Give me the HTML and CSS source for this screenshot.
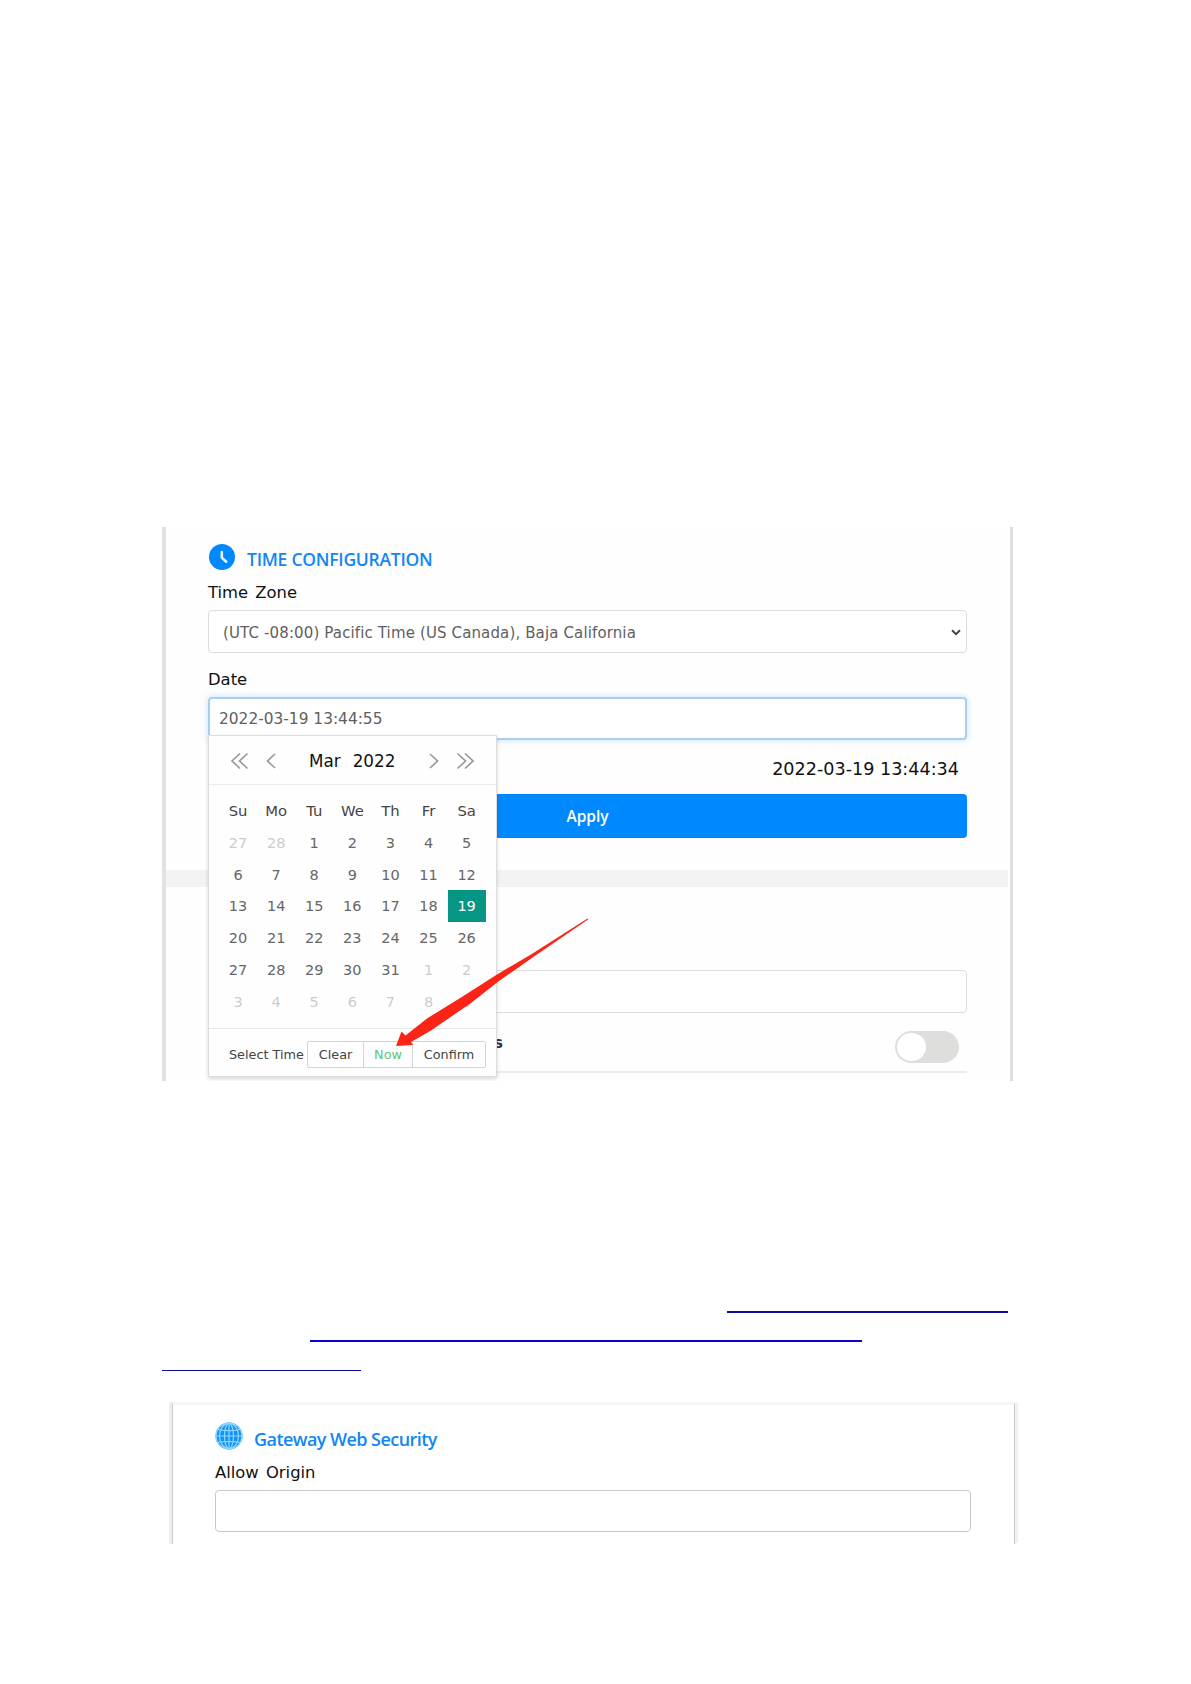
FILE: index.html
```html
<!DOCTYPE html>
<html lang="en">
<head>
    <meta charset="UTF-8">
    <meta name="viewport" content="width=device-width, initial-scale=1.0">
    <title>Time Configuration</title>
    <link rel="stylesheet" href="styles.css">
</head>
<body>
    <div class="time-panel">
        <section class="time-section">
            <h2 class="title">
                <svg class="clock" viewBox="0 0 26 26"><circle cx="13" cy="13" r="13" fill="#0088ff"/><path d="M12.8 8v5.7l4.4 4" fill="none" stroke="#e4f2ff" stroke-width="2.6" stroke-linecap="round"/></svg>
                <span class="title-text time-title">TIME CONFIGURATION</span>
            </h2>
            <div class="label">Time Zone</div>
            <div class="field select">
                <span>(UTC -08:00) Pacific Time (US Canada), Baja California</span>
                <svg class="caret" viewBox="0 0 10 7"><path d="M1 1.2l4 4 4-4" fill="none" stroke="#444" stroke-width="2"/></svg>
            </div>
            <div class="label date-label">Date</div>
            <div class="date-wrap">
                <div class="field date">2022-03-19 13:44:55</div>
                <div class="calendar">
                    <div class="cal-header">
                        <svg class="nav" viewBox="0 0 60 20"><path d="M11 2.500L3 10l8 7.500M18.500 2.500L10.500 10l8 7.500M46 3L38.500 10l7.500 7" fill="none" stroke="#999" stroke-width="1.700"/></svg>
                        <span class="month">Mar</span><span class="year">2022</span>
                        <svg class="nav" viewBox="0 0 60 20"><path d="M48 2.500L56 10l-8 7.500M40.500 2.500L48.500 10l-8 7.500M13 3L20.500 10l-7.500 7" fill="none" stroke="#999" stroke-width="1.700"/></svg>
                    </div>
                    <div class="days">
                        <b>Su</b><b>Mo</b><b>Tu</b><b>We</b><b>Th</b><b>Fr</b><b>Sa</b>
                        <i>27</i><i>28</i><span>1</span><span>2</span><span>3</span><span>4</span><span>5</span>
                        <span>6</span><span>7</span><span>8</span><span>9</span><span>10</span><span>11</span><span>12</span>
                        <span>13</span><span>14</span><span>15</span><span>16</span><span>17</span><span>18</span><span class="selected">19</span>
                        <span>20</span><span>21</span><span>22</span><span>23</span><span>24</span><span>25</span><span>26</span>
                        <span>27</span><span>28</span><span>29</span><span>30</span><span>31</span><i>1</i><i>2</i>
                        <i>3</i><i>4</i><i>5</i><i>6</i><i>7</i><i>8</i><i>9</i>
                    </div>
                    <div class="cal-footer">
                        <span class="select-time">Select Time</span>
                        <div class="buttons">
                            <span class="clear">Clear</span><span class="now">Now</span><span class="confirm">Confirm</span>
                        </div>
                    </div>
                </div>
                <svg class="arrow" viewBox="0 0 196 132"><path d="M193.500 0.500L194 1.500L140 38.500L105 63L77 85L37 112.500L17 124L19 127L2 128L7.500 113.500L11.500 117.500L33 100.500L67 79.500L103 56.500L137 36.500Z" fill="#fb2416"/></svg>
            </div>
            <div class="current-time">2022-03-19 13:44:34</div>
            <div class="apply">Apply</div>
        </section>
        <div class="divider"></div>
        <section class="next-section">
            <div class="field"></div>
            <div class="toggle-row">
                <span class="row-label">s</span>
                <span class="toggle"></span>
            </div>
        </section>
    </div>

    <div class="links">
        <div class="line line-one"></div>
        <div class="line line-two"></div>
        <div class="line line-three"></div>
    </div>

    <div class="security-panel">
        <h2 class="title">
            <svg class="globe" viewBox="0 0 28 28"><circle cx="14" cy="14" r="13.500" fill="#1592f5"/><g fill="none" stroke="#8fd8ff" stroke-width="1.200"><circle cx="14" cy="14" r="12.900"/><ellipse cx="14" cy="14" rx="9.500" ry="12.700"/><ellipse cx="14" cy="14" rx="4.500" ry="12.700"/><path d="M14 1v26M1 14h26M3 7.500q11 2.400 22 0M3 20.500q11-2.400 22 0"/></g></svg>
            <span class="title-text security-title">Gateway Web Security</span>
        </h2>
        <div class="label">Allow Origin</div>
        <div class="field"></div>
    </div>
</body>
</html>
```

FILE: styles.css
```css
*{
    box-sizing: border-box;
}
body{
    margin: 0;
    background: #fff;
    font-family: "DejaVu Sans", Verdana, sans-serif;
    color: #111;
}
.time-panel{
    width: 851px;
    height: 554px;
    margin: 527px 0 0 162px;
    border-left: 4px solid #e2e2e2;
    border-right: 3px solid #dedede;
    background: #fefefe;
    overflow: hidden;
}
.time-section{
    height: 343px;
    padding: 16px 43px 0 42px;
}
.title{
    display: flex;
    margin: 0;
    height: 36px;
}
.clock{
    width: 26px;
    height: 26px;
    margin: 1px 12px 0 1px;
}
.title-text{
    font-family: "Open Sans", sans-serif;
    font-weight: 600;
    font-size: 18px;
    line-height: 26px;
    color: #1087f5;
    white-space: nowrap;
}
.time-title{
    margin-top: 3px;
    font-size: 17.5px;
    letter-spacing: -0.25px;
}
.label{
    height: 31px;
    font-size: 16.4px;
    line-height: 28px;
    word-spacing: 2px;
}
.field{
    height: 43px;
    border: 1px solid #dcdcdc;
    border-radius: 4px;
    background: #fff;
    color: #606060;
}
.select{
    display: flex;
    justify-content: space-between;
    align-items: center;
    padding: 2px 5px 0 14px;
    font-size: 15px;
    letter-spacing: 0.13px;
}
.caret{
    width: 10px;
    height: 7px;
}
.date-label{
    height: 44px;
    padding-top: 13px;
}
.date-wrap{
    position: relative;
    height: 43px;
}
.date{
    padding-left: 9px;
    border: 2px solid #a9cff0;
    font-size: 15.4px;
    line-height: 41px;
    box-shadow: 0 0 6px rgba(130, 195, 255, 0.5);
}
/* date picker, opens over the fields below */
.calendar{
    position: absolute;
    left: 0;
    top: 38px;
    width: 289px;
    height: 342px;
    border: 1px solid #dcdcdc;
    background: #fefefe;
    box-shadow: 0 2px 4px rgba(0, 0, 0, 0.15);
}
.cal-header{
    display: flex;
    align-items: center;
    height: 49px;
    padding: 1px 19px 0 20px;
    border-bottom: 1px solid #ebebeb;
    font-size: 16.8px;
}
.nav{
    width: 60px;
    height: 20px;
}
.month{
    margin-left: 20px;
}
.year{
    margin: 0 auto 0 12px;
}
.days{
    display: grid;
    grid-template-columns: repeat(7, 38.1px);
    grid-template-rows: repeat(7, 31.8px);
    padding: 10px 0 0 10px;
    height: 243px;
    line-height: 32.4px;
    text-align: center;
    font-size: 14.5px;
    color: #666;
}
.days b{
    font-weight: normal;
    font-size: 14.8px;
    color: #444;
}
.days i{
    font-style: normal;
    color: #ccc;
}
.days .selected{
    background: #079585;
    color: #fff;
}
.cal-footer{
    display: flex;
    height: 49px;
    padding: 12px 0 0 20px;
    border-top: 1px solid #e8e8e8;
    font-size: 12.8px;
    color: #444;
}
.select-time{
    width: 78px;
    line-height: 28px;
    white-space: nowrap;
}
.buttons{
    display: flex;
    height: 27px;
    border: 1px solid #d4d4d4;
    border-radius: 2px;
    line-height: 25px;
    text-align: center;
}
.clear{
    width: 55px;
}
.now{
    width: 50px;
    border-left: 1px solid #d4d4d4;
    border-right: 1px solid #d4d4d4;
    color: #5fc27a;
}
.confirm{
    width: 72px;
}
.arrow{
    position: absolute;
    left: 186px;
    top: 221px;
    width: 196px;
    height: 132px;
}
.current-time{
    height: 54px;
    padding-right: 8px;
    line-height: 59px;
    font-size: 17.6px;
    text-align: right;
}
.apply{
    height: 44px;
    border-radius: 4px;
    background: #0088ff;
    color: #fff;
    font-family: "Open Sans", sans-serif;
    font-weight: 600;
    font-size: 15.5px;
    line-height: 45px;
    text-align: center;
}
.divider{
    height: 17px;
    margin-right: 2px;
    background: #f3f3f3;
}
.next-section{
    padding: 83px 43px 0 42px;
}
.toggle-row{
    display: flex;
    justify-content: space-between;
    height: 60px;
    padding: 18px 8px 0 286px;
    border-bottom: 2px solid #ececec;
}
.row-label{
    font-size: 15px;
    font-weight: bold;
    line-height: 24px;
    color: #334;
}
.toggle{
    width: 64px;
    height: 32px;
    padding: 2px;
    border-radius: 16px;
    background: #dededc;
}
.toggle::before{
    content: "";
    display: block;
    width: 29px;
    height: 28px;
    border-radius: 50%;
    background: #fff;
}
.links{
    height: 321px;
    padding: 230px 0 0 162px;
}
.line{
    height: 2px;
}
.line-one{
    width: 281px;
    margin-left: 565px;
    background: #0c0c9e;
}
.line-two{
    width: 552px;
    margin: 27px 0 28px 148px;
    background: #0b04cf;
}
.line-three{
    width: 199px;
    height: 1px;
    background: #0c0a98;
}
.security-panel{
    width: 843px;
    height: 142px;
    margin-left: 172px;
    padding: 17px 43px 0 42px;
    border-left: 1px solid #c9c9c9;
    border-right: 1px solid #c9c9c9;
    border-top: 3px solid #f6f6f6;
    /* side shadows only */
    box-shadow: 4px 0 0 -1px #f0f0f0, -3px 0 0 0 #ededed;
}
.globe{
    width: 28px;
    height: 28px;
    margin-right: 11px;
}
.security-title{
    margin-top: 4px;
    letter-spacing: -0.55px;
}
.security-panel .label{
    height: 32px;
    line-height: 29px;
}
.security-panel .field{
    height: 42px;
    border-color: #c8c8c8;
}
```
